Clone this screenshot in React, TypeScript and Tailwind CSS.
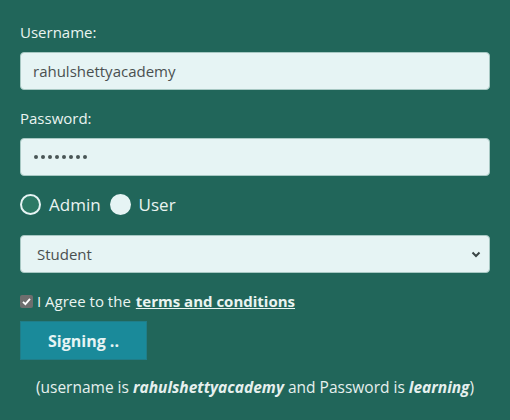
import React from "react";

const FONT = "font-['Open_Sans',sans-serif]";

function Radio({ checked, label }: { checked: boolean; label: string }) {
  return (
    <label className="flex items-center">
      <span
        className={
          checked
            ? "box-border h-[21px] w-[21px] rounded-full border-2 border-[#e6f4f4] bg-[#2d7a66]"
            : "box-border h-[21px] w-[21px] rounded-full bg-[#e6f4f4]"
        }
      />
      <span className="ml-[8px] mr-[9px] mt-[2px] text-[17px] leading-6 text-[#eaf4f1]">{label}</span>
    </label>
  );
}

export default function App() {
  return (
    <div className={`${FONT} min-h-[420px] w-full bg-[#21665a] px-5 pt-5`}>
      <label className="mb-2 block text-[15px] leading-6 text-[#eaf4f1]">Username:</label>
      <div className="flex h-[38px] items-center rounded-[4px] border border-[#a7c8c3] bg-[#e6f4f4] px-3 text-[15px] text-[#4a5050]">
        rahulshettyacademy
      </div>

      <label className="mb-2 mt-4 block text-[15px] leading-6 text-[#eaf4f1]">Password:</label>
      <div className="flex h-[38px] items-center gap-[3px] rounded-[4px] border border-[#a7c8c3] bg-[#e6f4f4] px-[13px]">
        {Array.from({ length: 8 }).map((_, i) => (
          <span key={i} className="h-[4px] w-[4px] rounded-full bg-[#4a5555]" />
        ))}
      </div>

      <div className="mt-4 flex h-6 items-center">
        <Radio checked label="Admin" />
        <Radio checked={false} label="User" />
      </div>

      <div className="mt-[19px] flex h-[38px] items-center justify-between rounded-[4px] border border-[#a7c8c3] bg-[#e6f4f4] pl-4 pr-[6px] text-[15px] text-[#4a5050]">
        <span>Student</span>
        <svg width="12" height="12" viewBox="0 0 12 12" className="mr-[1px]">
          <path d="M2.5 4.5 L6 8 L9.5 4.5" fill="none" stroke="#3a4545" strokeWidth="2" />
        </svg>
      </div>

      <div className="mt-4 flex h-6 items-center text-[15px] text-[#eaf4f1]">
        <span className="flex h-[13px] w-[13px] items-center justify-center rounded-[2px] bg-[#6e6e6e]">
          <svg width="11" height="11" viewBox="0 0 11 11">
            <path d="M2 5.8 L4.4 8.2 L9 2.8" fill="none" stroke="#ffffff" strokeWidth="1.8" />
          </svg>
        </span>
        <span className="ml-[4px]">I Agree to the</span>
        <span className="ml-[5px] font-bold underline">terms and conditions</span>
      </div>

      <button
        type="button"
        className="mt-2 h-[39px] w-[127px] border border-[#207d88] bg-[#1a8a9a] text-[16px] font-bold text-[#e6f4f4]"
      >
        Signing ..
      </button>

      <p className="mt-[15px] text-center text-[15.5px] leading-6 text-[#e6f0ee]">
        (username is <b><i>rahulshettyacademy</i></b> and Password is <b><i>learning</i></b>)
      </p>
    </div>
  );
}
